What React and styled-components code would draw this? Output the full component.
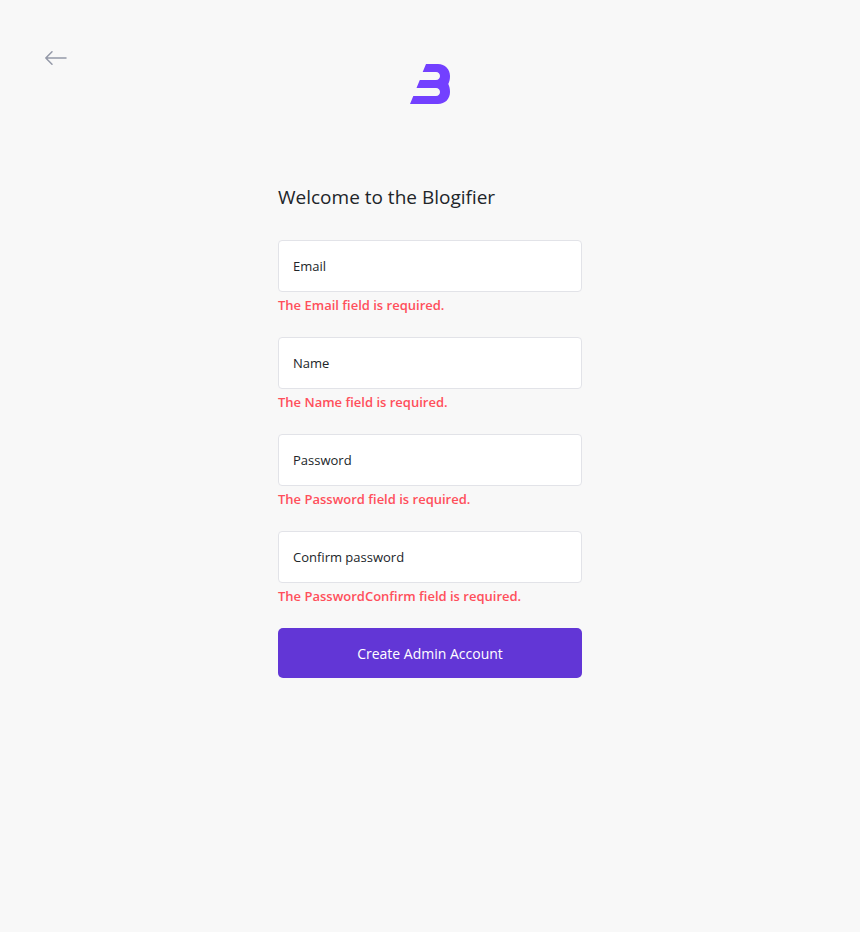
import React from "react";
import styled, { createGlobalStyle } from "styled-components";

const GlobalStyle = createGlobalStyle`
  *, *::before, *::after { box-sizing: border-box; }
  body {
    margin: 0;
    background: #f8f8f8;
    color: #212529;
    font-family: "Open Sans", "Noto Sans", sans-serif;
    font-size: 14px;
    line-height: 20px;
  }
`;

const Page = styled.div`
  display: grid;
  grid-template-columns: 1fr minmax(0, 304px) 1fr;
  align-items: start;
  min-height: 100vh;
  padding: 44px;
`;

const BackLink = styled.a`
  display: flex;
  width: 24px;
  height: 28px;
  align-items: center;
  color: #9499a8;
`;

const Main = styled.main`
  padding-top: 20px;
`;

const LogoLink = styled.a`
  display: block;
  width: 40px;
  margin: 0 auto 78px;
  color: #7340ff;

  svg { display: block; }
`;

const Title = styled.h1`
  margin: 0 0 28px;
  font-size: 19px;
  font-weight: 400;
  line-height: 30px;
`;

const Form = styled.form`
  display: flex;
  flex-direction: column;
  gap: 20px;
`;

const FieldGroup = styled.div`
  position: relative;
`;

const Input = styled.input`
  display: block;
  width: 100%;
  height: 52px;
  padding: 20px 14px 4px;
  border: 1px solid #e2e3e8;
  border-radius: 4px;
  background: #fff;
  color: inherit;
  font: inherit;

  &:focus {
    outline: none;
    border-color: #7340ff;
  }
`;

const Label = styled.label`
  position: absolute;
  top: 16px;
  left: 15px;
  pointer-events: none;
  font-size: 13px;

  ${Input}:focus + &,
  ${Input}:not(:placeholder-shown) + & {
    top: 2px;
    font-size: 12px;
  }
`;

const ErrorText = styled.div`
  padding: 3px 0 2px;
  color: #ff4f5b;
  font-size: 13px;
  font-weight: 600;
`;

const SubmitButton = styled.button`
  height: 50px;
  border: 0;
  border-radius: 5px;
  background: #6236d6;
  color: #fff;
  font-family: inherit;
  font-size: 14px;
  cursor: pointer;
`;

const fields = [
  { id: "email", type: "email", label: "Email", name: "Email" },
  { id: "name", type: "text", label: "Name", name: "Name" },
  { id: "password", type: "password", label: "Password", name: "Password" },
  { id: "confirm", type: "password", label: "Confirm password", name: "PasswordConfirm" },
];

function Field({ id, type, label, name }) {
  return (
    <FieldGroup>
      <Input id={id} name={name} type={type} placeholder=" " aria-invalid="true" aria-describedby={`${id}-error`} />
      <Label htmlFor={id}>{label}</Label>
      <ErrorText id={`${id}-error`}>The {name} field is required.</ErrorText>
    </FieldGroup>
  );
}

export default function App() {
  return (
    <>
      <GlobalStyle />
      <Page>
        <BackLink href="#" aria-label="Back">
          <svg width="24" height="24" viewBox="0 0 24 24" fill="none" stroke="currentColor" strokeWidth="1.5" strokeLinecap="round" strokeLinejoin="round" aria-hidden="true">
            <path d="M22 12H1.8M8 5.8 1.8 12 8 18.2" />
          </svg>
        </BackLink>
        <Main>
          <LogoLink href="#" aria-label="Blogifier">
            <svg width="40" height="40" viewBox="0 0 40 40" fill="currentColor" aria-hidden="true">
              <path d="M16 0H28C35 0 40 5 40 12C40 15 39.5 17.500 38.300 20C39.500 22.500 40 25 40 28C40 35 35 40 28 40H0L3.300 32H26C28.500 32 30 30.300 30 28S28.500 24 26 24H6.500L9.800 16H26C28.500 16 30 14.300 30 12S28.500 8 26 8H12.700Z" />
            </svg>
          </LogoLink>
          <Title>Welcome to the Blogifier</Title>
          <Form noValidate onSubmit={(event) => event.preventDefault()}>
            {fields.map((field) => (
              <Field key={field.id} {...field} />
            ))}
            <SubmitButton type="submit">Create Admin Account</SubmitButton>
          </Form>
        </Main>
      </Page>
    </>
  );
}
